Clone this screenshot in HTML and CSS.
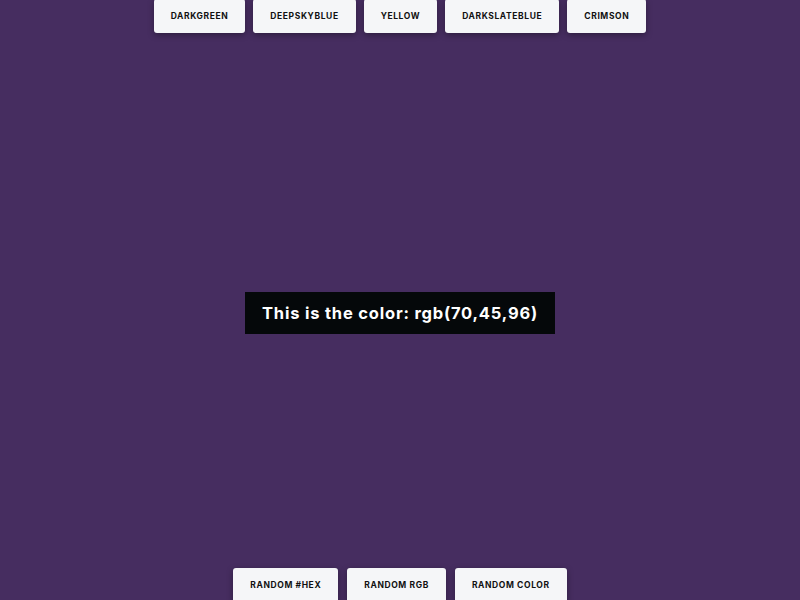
FILE: index.html
```html
<!DOCTYPE html>
<html>
<head>
<meta charset="utf-8">
<link rel="stylesheet" href="styles.css">
</head>
<body>
<div class="page">
  <div class="bar bar-top">
    <button class="btn">DARKGREEN</button>
    <button class="btn">DEEPSKYBLUE</button>
    <button class="btn">YELLOW</button>
    <button class="btn">DARKSLATEBLUE</button>
    <button class="btn">CRIMSON</button>
  </div>
  <div class="label">This is the color: rgb(70,45,96)</div>
  <div class="bar bar-bottom">
    <button class="btn">RANDOM #HEX</button>
    <button class="btn">RANDOM RGB</button>
    <button class="btn">RANDOM COLOR</button>
  </div>
</div>
</body>
</html>
```
FILE: styles.css
```css
html, body {
  margin: 0;
  padding: 0;
  height: 100%;
  overflow: hidden;
}
body {
  background: rgb(70,45,96);
  font-family: Inter, "Liberation Sans", sans-serif;
}
.page {
  height: 600px;
  display: flex;
  flex-direction: column;
  align-items: center;
  justify-content: space-between;
}
.bar {
  display: flex;
  gap: 8px;
}
.bar-top {
  margin-top: -1px;
}
.bar-bottom {
  margin-bottom: -2px;
  gap: 9px;
}
.btn {
  font-family: Inter, "Liberation Sans", sans-serif;
  font-size: 8.5px;
  font-weight: 700;
  letter-spacing: 0.6px;
  color: #111;
  background: #f5f6f8;
  border: none;
  border-radius: 3px;
  height: 34px;
  padding: 0 17px;
  box-shadow: 0 2px 6px rgba(0,0,0,0.35);
}
.label {
  margin-top: 24px;
  background: #05080a;
  color: #fff;
  font-size: 16.5px;
  font-weight: 700;
  letter-spacing: 0.8px;
  padding: 0 17px;
  height: 42px;
  line-height: 42px;
}
```
